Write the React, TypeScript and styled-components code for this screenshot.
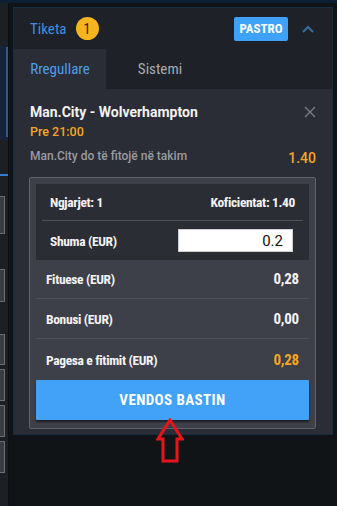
import * as React from "react";
import styled, { createGlobalStyle } from "styled-components";

const narrow = `"Liberation Sans Narrow", "Roboto Condensed", "DejaVu Sans Condensed", Roboto, sans-serif`;
const sans = `Roboto, "Liberation Sans", Arial, sans-serif`;

const Global = createGlobalStyle`
  html, body {
    margin: 0;
    padding: 0;
    background: #111417;
    width: 337px;
    height: 506px;
    overflow: hidden;
  }
  * { box-sizing: border-box; }
`;

const Page = styled.div`
  position: relative;
  width: 337px;
  height: 506px;
  background: #111417;
  display: flex;
  flex-direction: column;
`;

const TopStrip = styled.div`
  height: 3px;
  background: #0d1f36;
  flex-shrink: 0;
`;

const Body = styled.div`
  display: flex;
  flex: 1;
  gap: 4px;
`;

const Rail = styled.div`
  width: 9px;
  display: flex;
  flex-direction: column;
  background: #1c1f24;
  border-right: 1px solid #0d0f12;
`;

const RailBlock = styled.div<{ $h: number; $bg?: string }>`
  height: ${(p) => p.$h}px;
  background: ${(p) => p.$bg || "transparent"};
  position: relative;
  flex-shrink: 0;
`;

const RailScroll = styled.div`
  position: absolute;
  right: 0;
  top: 1px;
  width: 2px;
  height: 90px;
  background: #2d5a8c;
`;

const RailLine = styled.div`
  height: 2px;
  background: #2e7fd0;
  flex-shrink: 0;
`;

const RailButton = styled.div<{ $h: number; $mt: number }>`
  margin-top: ${(p) => p.$mt}px;
  height: ${(p) => p.$h}px;
  width: 5px;
  background: #393c42;
  border: 1px solid #6b6e74;
  border-left: none;
  flex-shrink: 0;
`;

const Panel = styled.div`
  margin-top: 4px;
  width: 320px;
  height: 428px;
  border: 1px solid #14303f;
  background: #2a2d35;
  display: flex;
  flex-direction: column;
`;

const Header = styled.div`
  height: 41px;
  background: #1e2127;
  display: flex;
  align-items: center;
  padding: 0 18px 0 16px;
`;

const Title = styled.span`
  font-family: ${narrow};
  font-size: 15px;
  color: #3d8fe6;
`;

const Badge = styled.span`
  margin-left: 9px;
  width: 23px;
  height: 23px;
  border-radius: 50%;
  background: #f6b51e;
  color: #2a2000;
  font-family: ${narrow};
  font-size: 14px;
  display: flex;
  align-items: center;
  justify-content: center;
`;

const Spacer = styled.div`
  flex: 1;
`;

const ClearButton = styled.button`
  width: 54px;
  height: 24px;
  border: none;
  border-radius: 2px;
  background: #3ea2f8;
  color: #fff;
  font-family: ${narrow};
  font-weight: 700;
  font-size: 13px;
  padding: 0;
  margin-right: 14px;
`;

const Tabs = styled.div`
  height: 40px;
  display: flex;
  background: #1e2127;
`;

const Tab = styled.div<{ $active?: boolean; $w: number }>`
  width: ${(p) => p.$w}px;
  display: flex;
  align-items: center;
  justify-content: center;
  font-family: ${narrow};
  font-size: 15px;
  color: ${(p) => (p.$active ? "#4a9ff0" : "#a9acb1")};
  background: ${(p) => (p.$active ? "#2a2d35" : "transparent")};
`;

const Content = styled.div`
  padding: 15px 16px 0 16px;
  display: flex;
  flex-direction: column;
`;

const MatchRow = styled.div`
  display: flex;
  justify-content: space-between;
  align-items: flex-start;
`;

const MatchName = styled.div`
  font-family: ${sans};
  font-weight: 700;
  font-size: 14px;
  line-height: 17px;
  color: #f2f2f2;
`;

const Close = styled.svg`
  margin-top: 2px;
`;

const Time = styled.div`
  font-family: ${sans};
  font-weight: 500;
  font-size: 12.5px;
  line-height: 16px;
  color: #f5a623;
  margin-top: 3px;
`;

const PickRow = styled.div`
  margin-top: 5px;
  height: 22px;
  display: flex;
  justify-content: space-between;
  align-items: center;
`;

const PickName = styled.span`
  font-family: ${sans};
  font-weight: 500;
  font-size: 12px;
  color: #9a9ca1;
`;

const PickOdd = styled.span`
  font-family: ${sans};
  font-weight: 500;
  font-size: 14px;
  color: #f5a623;
  margin-top: 4px;
`;

const SlipBox = styled.div`
  margin: 10px 0 0 -1px;
  border: 1px solid #606369;
  border-radius: 2px;
  background: #3d4048;
  padding: 6px 6px 8px 6px;
  display: flex;
  flex-direction: column;
`;

const InnerBox = styled.div`
  background: #2a2d33;
  padding: 0 6px;
`;

const Row = styled.div<{ $h: number; $line?: boolean; $pad?: number }>`
  height: ${(p) => p.$h}px;
  display: flex;
  align-items: center;
  justify-content: space-between;
  padding: 0 ${(p) => p.$pad ?? 10}px;
  border-bottom: ${(p) => (p.$line ? "1px solid #4e5157" : "none")};
`;

const Label = styled.span`
  font-family: ${narrow};
  font-size: 13.5px;
  font-weight: 700;
  letter-spacing: -0.35px;
  color: #f4f4f4;
`;

const Value = styled.span<{ $accent?: boolean }>`
  font-family: ${narrow};
  font-size: 15px;
  font-weight: 700;
  letter-spacing: -0.2px;
  color: ${(p) => (p.$accent ? "#f5a623" : "#f4f4f4")};
`;

const AmountInput = styled.input`
  width: 115px;
  height: 23px;
  border: 1px solid #cfcfcf;
  background: #fff;
  text-align: right;
  padding: 0 9px 0 0;
  margin-right: 2px;
  font-family: ${sans};
  font-size: 15px;
  color: #111;
  outline: none;
`;

const PlaceButton = styled.button`
  height: 40px;
  border: none;
  border-radius: 1px;
  background: #42a2f8;
  color: #fff;
  font-family: ${narrow};
  font-size: 15px;
  font-weight: 700;
  letter-spacing: 0.4px;
  box-shadow: 0 2px 2px rgba(0, 0, 0, 0.55);
  padding: 0;
`;

const Arrow = styled.svg`
  position: absolute;
  left: 156px;
  top: 418px;
`;

export default function App() {
  return (
    <Page>
      <Global />
      <TopStrip />
      <Body>
        <Rail>
          <RailBlock $h={43} />
          <RailBlock $h={94} $bg="#17233a">
            <RailScroll />
          </RailBlock>
          <RailBlock $h={34} />
          <RailLine />
          <RailButton $mt={20} $h={38} />
          <RailButton $mt={35} $h={33} />
          <RailButton $mt={32} $h={31} />
          <RailButton $mt={4} $h={32} />
          <RailButton $mt={4} $h={32} />
          <RailButton $mt={4} $h={32} />
        </Rail>
        <Panel>
          <Header>
            <Title>Tiketa</Title>
            <Badge>1</Badge>
            <Spacer />
            <ClearButton>PASTRO</ClearButton>
            <svg width="12" height="8" viewBox="0 0 12 8">
              <path d="M1 7 L6 2 L11 7" fill="none" stroke="#3a6c9c" strokeWidth="2" />
            </svg>
          </Header>
          <Tabs>
            <Tab $active $w={92}>Rregullare</Tab>
            <Tab $w={108}>Sistemi</Tab>
          </Tabs>
          <Content>
            <MatchRow>
              <MatchName>Man.City - Wolverhampton</MatchName>
              <Close width="12" height="12" viewBox="0 0 12 12">
                <path d="M1 1 L11 11 M11 1 L1 11" stroke="#7d8086" strokeWidth="1.2" />
              </Close>
            </MatchRow>
            <Time>Pre 21:00</Time>
            <PickRow>
              <PickName>Man.City do të fitojë në takim</PickName>
              <PickOdd>1.40</PickOdd>
            </PickRow>
            <SlipBox>
              <InnerBox>
                <Row $h={37} $line $pad={8}>
                  <Label>Ngjarjet: 1</Label>
                  <Label>Koficientat: 1.40</Label>
                </Row>
                <Row $h={39} $pad={8}>
                  <Label>Shuma (EUR)</Label>
                  <AmountInput defaultValue="0.2" />
                </Row>
              </InnerBox>
              <Row $h={39} $line>
                <Label>Fituese (EUR)</Label>
                <Value>0,28</Value>
              </Row>
              <Row $h={40} $line>
                <Label>Bonusi (EUR)</Label>
                <Value>0,00</Value>
              </Row>
              <Row $h={41}>
                <Label>Pagesa e fitimit (EUR)</Label>
                <Value $accent>0,28</Value>
              </Row>
              <PlaceButton>VENDOS BASTIN</PlaceButton>
            </SlipBox>
          </Content>
        </Panel>
      </Body>
      <Arrow width="28" height="46" viewBox="0 0 28 46">
        <path
          d="M14 2 L26 21 L21 21 L21 43 L7 43 L7 21 L2 21 Z"
          fill="none"
          stroke="#e8141c"
          strokeWidth="3"
          strokeLinejoin="miter"
        />
      </Arrow>
    </Page>
  );
}
